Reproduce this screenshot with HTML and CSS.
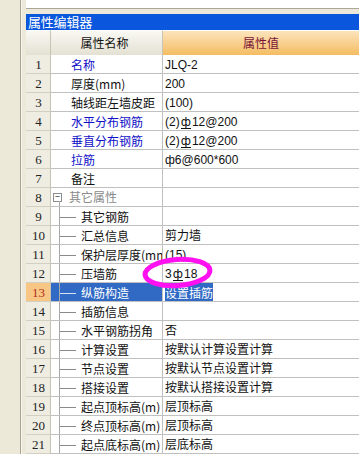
FILE: index.html
```html
<!DOCTYPE html>
<html>
<head>
<meta charset="utf-8">
<link rel="stylesheet" href="styles.css">
</head>
<body>
<div class="app">
  <div class="side"><div class="side-line"></div></div>
  <div class="panel">
    <div class="top"></div>
    <div class="band"></div>
    <div class="title">属性编辑器</div>
    <div class="grid">
      <div class="hnum"></div><div class="hname">属性名称</div><div class="hval">属性值</div>

      <div class="num">1</div><div class="name blue">名称</div><div class="val">JLQ-2</div>
      <div class="num">2</div><div class="name">厚度(mm)</div><div class="val">200</div>
      <div class="num">3</div><div class="name">轴线距左墙皮距</div><div class="val">(100)</div>
      <div class="num">4</div><div class="name blue">水平分布钢筋</div><div class="val">(2)<span class="bar">ф</span>12@200</div>
      <div class="num">5</div><div class="name blue">垂直分布钢筋</div><div class="val">(2)<span class="bar">ф</span>12@200</div>
      <div class="num">6</div><div class="name blue">拉筋</div><div class="val">ф6@600*600</div>
      <div class="num">7</div><div class="name">备注</div><div class="val"></div>
      <div class="num">8</div><div class="name group"><span class="box">−</span>其它属性</div><div class="val"></div>
      <div class="num">9</div><div class="name tree">其它钢筋</div><div class="val"></div>
      <div class="num">10</div><div class="name tree">汇总信息</div><div class="val">剪力墙</div>
      <div class="num">11</div><div class="name tree">保护层厚度(mm)</div><div class="val">(15)</div>
      <div class="num">12</div><div class="name tree">压墙筋</div><div class="val">3<span class="bar">ф</span>18</div>
      <div class="num cur">13</div><div class="name tree sel">纵筋构造</div><div class="val"><span class="hl">设置插筋</span></div>
      <div class="num">14</div><div class="name tree">插筋信息</div><div class="val"></div>
      <div class="num">15</div><div class="name tree">水平钢筋拐角</div><div class="val">否</div>
      <div class="num">16</div><div class="name tree">计算设置</div><div class="val">按默认计算设置计算</div>
      <div class="num">17</div><div class="name tree">节点设置</div><div class="val">按默认节点设置计算</div>
      <div class="num">18</div><div class="name tree">搭接设置</div><div class="val">按默认搭接设置计算</div>
      <div class="num">19</div><div class="name tree">起点顶标高(m)</div><div class="val">层顶标高</div>
      <div class="num">20</div><div class="name tree">终点顶标高(m)</div><div class="val">层顶标高</div>
      <div class="num">21</div><div class="name tree">起点底标高(m)</div><div class="val">层底标高</div>
    </div>
  </div>
</div>
<svg class="mark" width="359" height="454" viewBox="0 0 359 454">
  <ellipse cx="177.5" cy="272.5" rx="32.5" ry="13" fill="none" stroke="#ff10f0" stroke-width="5" transform="rotate(-4 177.5 272.5)"/>
</svg>
</body>
</html>
```

FILE: styles.css
```css
html, body {
  margin: 0;
  padding: 0;
  width: 359px;
  height: 454px;
  overflow: hidden;
  background: #fff;
  font-family: "Liberation Sans", "Noto Sans CJK SC", sans-serif;
  font-size: 12px;
}

.app {
  display: flex;
  height: 454px;
}

.side {
  width: 26px;
  flex: none;
  background: #ece9d8;
  display: flex;
}

.side-line {
  margin-left: 20px;
  width: 1px;
  background: #a7a391;
  border-right: 1px solid #f7f6f0;
}

.panel {
  flex: 1;
  display: flex;
  flex-direction: column;
  min-width: 0;
}

.top {
  height: 10px;
  background: #fff;
  border-bottom: 1px solid #aca899;
}

.band {
  height: 6px;
  background: #ece9d8;
}

.title {
  height: 16px;
  line-height: 16px;
  background: #0a56dd;
  color: #fff;
  font-family: "Noto Sans CJK SC", sans-serif;
  font-size: 13px;
  padding-left: 2px;
  letter-spacing: -0.2px;
}

.grid {
  display: grid;
  grid-template-columns: 25px 112px 1fr;
  grid-template-rows: 25px;
  grid-auto-rows: 19px;
}

.grid > div {
  box-sizing: border-box;
  white-space: nowrap;
  overflow: hidden;
}

.hnum, .hname {
  background: linear-gradient(#f9f8f3, #e4e1d3);
  border-right: 1px solid #c7c4b4;
  border-top: 1px solid #fff;
}

.hname {
  text-align: center;
  line-height: 23px;
  color: #111;
  font-family: "Noto Sans CJK SC", sans-serif;
  padding-right: 4px;
}

.hval {
  background: linear-gradient(#fde4bd, #f4bd62);
  border-top: 1px solid #fff;
  text-align: center;
  line-height: 23px;
  color: #7a1036;
  font-family: "Noto Sans CJK SC", sans-serif;
}

.num {
  background: #efede2;
  border-right: 1px solid #c6c3b3;
  border-bottom: 1px solid #d3d0c2;
  text-align: center;
  padding-top: 1px;
  line-height: 17px;
  color: #222;
  font-family: "Liberation Serif", serif;
  font-size: 13px;
  padding-left: 1px;
}

.num.cur {
  background: #f8c785;
  color: #b03020;
}

.name {
  border-right: 1px solid #c0c0c0;
  border-bottom: 1px solid #c0c0c0;
  padding-left: 20px;
  padding-top: 1px;
  line-height: 18px;
  color: #111;
  font-family: "Noto Sans CJK SC", sans-serif;
  position: relative;
}

.name.blue {
  color: #1010c8;
}

.name.group {
  color: #8a8a8a;
  padding-left: 2px;
  padding-top: 0;
  display: flex;
  align-items: center;
  gap: 7px;
}

.box {
  width: 9px;
  height: 9px;
  box-sizing: border-box;
  border: 1px solid #8d8d8d;
  background: #fff;
  color: #222;
  font-size: 9px;
  line-height: 6px;
  text-align: center;
  flex: none;
  position: relative;
}

.name.group::after {
  content: "";
  position: absolute;
  left: 8px;
  top: 13px;
  bottom: -1px;
  border-left: 1px solid #a8a8a8;
}

.name.tree {
  padding-left: 30px;
}

.name.tree::before {
  content: "";
  position: absolute;
  left: 8px;
  top: 0;
  bottom: -1px;
  border-left: 1px solid #a8a8a8;
}

.name.tree::after {
  content: "";
  position: absolute;
  left: 9px;
  width: 16px;
  top: 10px;
  border-top: 1px solid #8a8a8a;
}

.name.sel {
  background: #316ac5;
  color: #fff;
}

.name.sel::after {
  border-top-color: #d8e2f4;
}

.val {
  border-bottom: 1px solid #c0c0c0;
  padding-left: 2px;
  padding-top: 1px;
  line-height: 18px;
  color: #111;
  font-family: "Liberation Sans", "Noto Sans CJK SC", sans-serif;
}

.bar {
  font-family: "DejaVu Sans", sans-serif;
  border-bottom: 1px solid #111;
  line-height: 11px;
  display: inline-block;
  margin: 0 1px;
}

.hl {
  background: #316ac5;
  color: #fff;
  font-family: "Noto Sans CJK SC", sans-serif;
  padding: 1px 0;
}

.mark {
  position: absolute;
  left: 0;
  top: 0;
  pointer-events: none;
}
```
